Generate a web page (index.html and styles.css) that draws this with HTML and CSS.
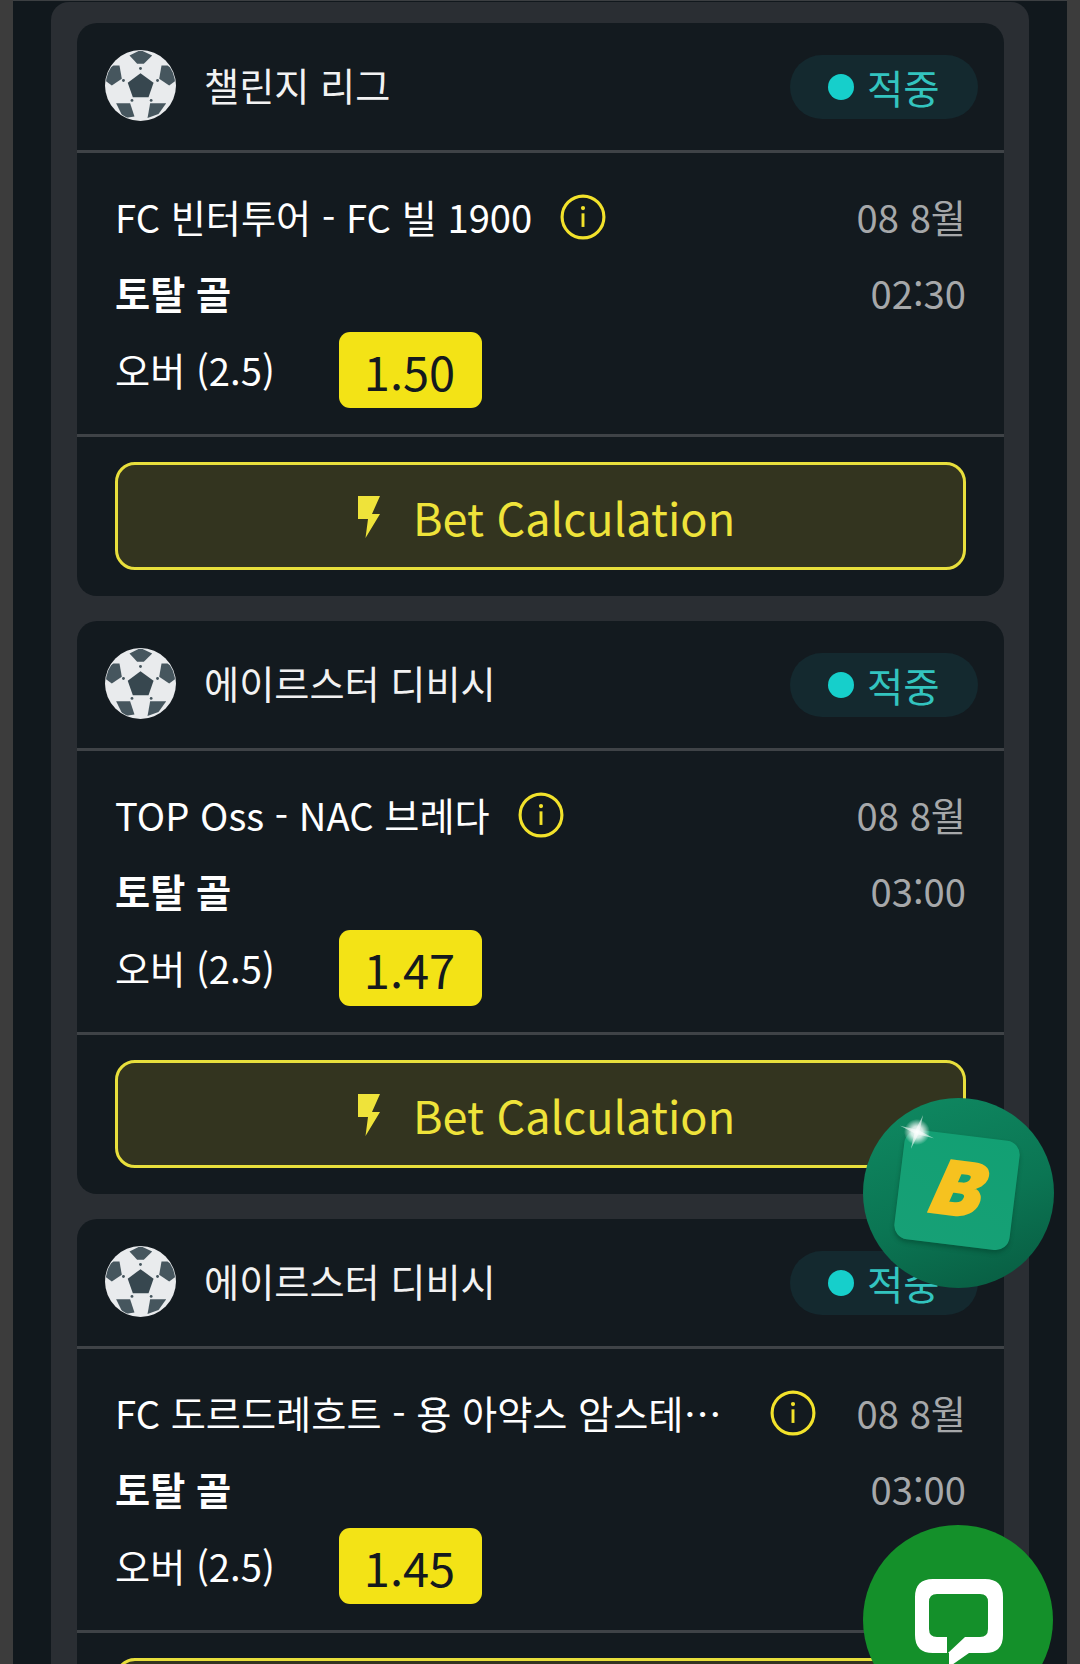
FILE: index.html
```html
<!DOCTYPE html>
<html lang="ko">
  <head>
    <meta charset="UTF-8" />
    <meta name="viewport" content="width=device-width, initial-scale=1.0" />
    <title>Bet History</title>
    <link rel="stylesheet" href="styles.css">
  </head>
  <body>
    <svg class="icon-defs" width="0" height="0">
      <defs>
        <clipPath id="ballClip"><circle cx="50" cy="50" r="49" /></clipPath>
        <symbol id="ball" viewBox="0 0 100 100">
          <circle cx="50" cy="50" r="50" fill="#e9ebed" />
          <g clip-path="url(#ballClip)" fill="#46565e">
            <path fill="#37474f" d="M50 32.6 68.4 46.2 61.3 66.5H39.2L32 46.2Z" />
            <path d="M34.5 7.7 50 0 66.5 7.7 54.7 19.4H45.3Z" />
            <path d="M11.9 21.8H20.4L23.7 40.6 9.6 50 0 43V30Z" />
            <path d="M88 21.8H79.6L76.3 40.6 90.4 50 100 43V30Z" />
            <path d="M15.7 74.9H35.4L41.5 93.7 26 96Z" />
            <path d="M63.6 74.9H86.2L75.4 90 59.9 95.6Z" />
            <circle cx="50" cy="26" r="2" />
            <circle cx="26" cy="43" r="2" />
            <circle cx="74" cy="43" r="2" />
            <circle cx="38" cy="71" r="2" />
            <circle cx="65" cy="71" r="2" />
          </g>
        </symbol>
        <symbol id="info" viewBox="0 0 44 44">
          <circle cx="22" cy="22" r="20" fill="none" stroke="currentColor" stroke-width="3" />
          <circle cx="22" cy="13.5" r="2" fill="currentColor" />
          <rect x="20.6" y="18.5" width="2.8" height="13" fill="currentColor" />
        </symbol>
        <symbol id="bolt" viewBox="0 0 22 42">
          <path fill="currentColor" d="M0 0H22L14 18H22L7.5 42 10 23H0Z" />
        </symbol>
      </defs>
    </svg>

    <div class="page">
      <div class="frame">
        <div class="list">

          <section class="card">
            <header class="card-head">
              <svg class="ball"><use href="#ball" /></svg>
              <span class="league">챌린지 리그</span>
              <span class="status"><i class="status-dot"></i>적중</span>
            </header>
            <div class="card-body">
              <div class="row">
                <span class="match"><span class="match-name">FC 빈터투어 - FC 빌 1900</span><svg class="info"><use href="#info" /></svg></span>
                <span class="meta">08 8월</span>
              </div>
              <div class="row">
                <strong class="market">토탈 골</strong>
                <span class="meta">02:30</span>
              </div>
              <div class="row row-pick">
                <span class="pick">오버 (2.5)</span>
                <span class="odds">1.50</span>
              </div>
            </div>
            <div class="card-foot">
              <button class="calc"><svg class="bolt"><use href="#bolt" /></svg>Bet Calculation</button>
            </div>
          </section>

          <section class="card">
            <header class="card-head">
              <svg class="ball"><use href="#ball" /></svg>
              <span class="league">에이르스터 디비시</span>
              <span class="status"><i class="status-dot"></i>적중</span>
            </header>
            <div class="card-body">
              <div class="row">
                <span class="match"><span class="match-name">TOP Oss - NAC 브레다</span><svg class="info"><use href="#info" /></svg></span>
                <span class="meta">08 8월</span>
              </div>
              <div class="row">
                <strong class="market">토탈 골</strong>
                <span class="meta">03:00</span>
              </div>
              <div class="row row-pick">
                <span class="pick">오버 (2.5)</span>
                <span class="odds">1.47</span>
              </div>
            </div>
            <div class="card-foot">
              <button class="calc"><svg class="bolt"><use href="#bolt" /></svg>Bet Calculation</button>
            </div>
          </section>

          <section class="card">
            <header class="card-head">
              <svg class="ball"><use href="#ball" /></svg>
              <span class="league">에이르스터 디비시</span>
              <span class="status"><i class="status-dot"></i>적중</span>
            </header>
            <div class="card-body">
              <div class="row">
                <span class="match"><span class="match-name">FC 도르드레흐트 - 용 아약스 암스테르담</span><svg class="info"><use href="#info" /></svg></span>
                <span class="meta">08 8월</span>
              </div>
              <div class="row">
                <strong class="market">토탈 골</strong>
                <span class="meta">03:00</span>
              </div>
              <div class="row row-pick">
                <span class="pick">오버 (2.5)</span>
                <span class="odds">1.45</span>
              </div>
            </div>
            <div class="card-foot">
              <button class="calc"><svg class="bolt"><use href="#bolt" /></svg>Bet Calculation</button>
            </div>
          </section>

        </div>
      </div>

      <!-- Floating buttons -->
      <div class="float-bonus">
        <div class="bonus-tile"><span class="bonus-letter">B</span></div>
        <svg class="sparkle" viewBox="0 0 60 60">
          <defs>
            <radialGradient id="glow">
              <stop offset="0" stop-color="#fff" stop-opacity="1" />
              <stop offset="0.45" stop-color="#fff" stop-opacity="0.8" />
              <stop offset="1" stop-color="#fff" stop-opacity="0" />
            </radialGradient>
          </defs>
          <circle cx="30" cy="30" r="13" fill="url(#glow)" />
          <path fill="#fff" opacity="0.55" d="M30 12 32 28 48 30 32 32 30 48 28 32 12 30 28 28Z" />
        </svg>
      </div>
      <div class="float-chat">
        <svg class="chat-icon" viewBox="0 0 90 100">
          <path fill="#fff" fill-rule="evenodd" d="M18 0H70Q88 0 88 18V56Q88 74 70 74H54L34 88V74H18Q0 74 0 56V18Q0 0 18 0ZM22 15Q14 15 14 23V50Q14 58 22 58H32V74H33L50 58H65Q73 58 73 50V23Q73 15 65 15Z" />
        </svg>
      </div>
    </div>
  </body>
</html>
```

FILE: styles.css
```css
body {
  margin: 0;
  background-color: #3c3c3c;
  font-family: "Noto Sans CJK KR", "Noto Sans", sans-serif;
  color: #fff;
}

.icon-defs {
  position: absolute;
}

.page {
  position: relative;
  height: 1664px;
  overflow: hidden;
  padding: 0 13px;
  box-sizing: border-box;
}

.frame {
  background-color: #11181d;
  padding: 1px 38px 0 38px;
  height: 100%;
  box-sizing: border-box;
  border-top: 1px solid #3c3f42;
}

.list {
  background-color: #2a2e33;
  border-radius: 18px 18px 0 0;
  padding: 21px 25px 0 26px;
  display: flex;
  flex-direction: column;
  gap: 25px;
}

.card {
  background-color: #131a1f;
  border-radius: 20px;
}

.card-head {
  height: 127px;
  display: flex;
  align-items: center;
  padding: 0 26px 0 28px;
  border-bottom: 3px solid #3f4347;
}

.ball {
  width: 71px;
  height: 71px;
  margin-right: 28px;
  margin-bottom: 3px;
  flex-shrink: 0;
}

.league {
  font-size: 38.2px;
  color: #f2f2f2;
  flex: 1;
  margin-bottom: 4px;
}

.status {
  height: 64px;
  width: 188px;
  box-sizing: border-box;
  padding-left: 38px;
  border-radius: 32px;
  background-color: #14292f;
  color: #33c4bf;
  font-size: 39.5px;
  display: flex;
  align-items: center;
}

.status-dot {
  width: 26px;
  height: 26px;
  border-radius: 50%;
  background-color: #16cfcb;
  margin-right: 13px;
}

.card-body {
  padding: 27px 38px 26px 38px;
  border-bottom: 3px solid #3f4347;
}

.row {
  height: 76px;
  box-sizing: border-box;
  padding-bottom: 4px;
  display: flex;
  align-items: center;
  justify-content: space-between;
  font-size: 38.2px;
}

.row-pick {
  justify-content: flex-start;
  padding-bottom: 0;
}

.match {
  display: flex;
  align-items: center;
  gap: 28px;
  min-width: 0;
}

.match-name {
  max-width: 627px;
  white-space: nowrap;
  overflow: hidden;
  text-overflow: ellipsis;
}

.info {
  width: 46px;
  height: 46px;
  margin-top: 2px;
  color: #f2e22b;
  flex-shrink: 0;
}

.meta {
  color: #a6a8aa;
  white-space: nowrap;
}

.market {
  font-weight: 700;
}

.pick {
  width: 224px;
  margin-bottom: 2px;
}

.odds {
  width: 143px;
  height: 76px;
  border-radius: 11px;
  background-color: #f3e316;
  color: #14191e;
  font-size: 47px;
  padding-right: 2px;
  box-sizing: border-box;
  display: flex;
  align-items: center;
  justify-content: center;
}

.card-foot {
  padding: 25px 38px 26px 38px;
}

.calc {
  width: 100%;
  height: 108px;
  box-sizing: border-box;
  border: 3px solid #e8df3c;
  border-radius: 20px;
  background-color: #33341f;
  color: #efe33a;
  font-family: inherit;
  font-size: 45px;
  padding-left: 18px;
  display: flex;
  align-items: center;
  justify-content: center;
}

.bolt {
  width: 22px;
  height: 42px;
  margin-right: 33px;
  margin-top: 1px;
}

.float-bonus {
  position: absolute;
  left: 863px;
  top: 1098px;
  width: 191px;
  height: 190px;
  border-radius: 50%;
  background: linear-gradient(160deg, #0f8a62 0%, #0b7553 55%, #085a40 100%);
}

.bonus-tile {
  position: absolute;
  left: 36px;
  top: 37px;
  width: 116px;
  height: 110px;
  border-radius: 14px;
  background: linear-gradient(200deg, #12a073, #17a076);
  box-shadow: 0 3px 4px rgba(0, 60, 40, 0.45);
  transform: rotate(7deg);
  display: flex;
  align-items: center;
  justify-content: center;
}

.bonus-letter {
  font-family: "Inter", sans-serif;
  font-weight: 900;
  font-style: italic;
  font-size: 74px;
  color: #f6c21f;
  -webkit-text-stroke: 2px #f6c21f;
  margin: -4px 0 0 5px;
  transform: skewX(-8deg);
}

.sparkle {
  position: absolute;
  left: 24px;
  top: 4px;
  width: 60px;
  height: 60px;
  transform: rotate(20deg);
}

.float-chat {
  position: absolute;
  left: 863px;
  top: 1525px;
  width: 190px;
  height: 190px;
  border-radius: 50%;
  background-color: #14902a;
}

.chat-icon {
  position: absolute;
  left: 52px;
  top: 54px;
  width: 90px;
  height: 100px;
}
```
